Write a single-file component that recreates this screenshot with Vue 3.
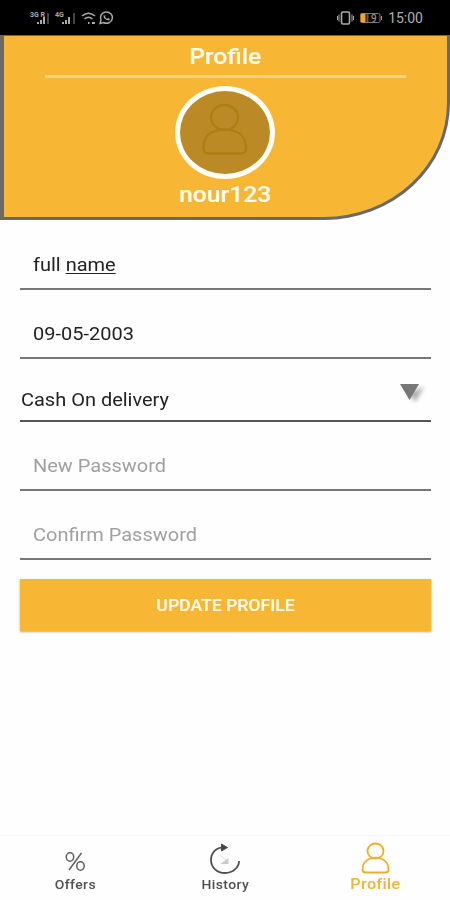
<script setup>
import { ref } from 'vue'

const fullName = ref(['full ', 'name'])
const birthDate = ref('09-05-2003')
const payment = ref('Cash On delivery')
const username = ref('nour123')
const passwords = ['New Password', 'Confirm Password']
</script>

<template>
  <main class="screen">
    <div class="status">
      <svg class="status-left" width="90" height="20" viewBox="0 0 90 20" fill="none">
        <text x="0" y="8" class="tiny">3G R</text>
        <g fill="#aaa">
          <path d="M7 13h2v2H7zM10 11h2v4h-2zM13 8h2v7h-2z" />
          <path d="M17 4h2v11h-2z" fill="#444" />
          <path d="M32 13h2v2h-2zM35 11h2v4h-2zM38 8h2v7h-2z" />
          <path d="M43 4h2v11h-2z" fill="#444" />
        </g>
        <text x="25" y="8" class="tiny">4G</text>
        <g stroke="#aaa" stroke-width="1.5">
          <path d="M52 7q6.5-5.500 13 0M54.500 10q4-3.500 8 0" />
          <path d="M58 14h1.500M62 14h3" stroke-width="2" />
          <path d="M70 14.500l1-3.500a6 5.600 0 1 1 2.500 2.500z" />
          <path d="M73.500 6.500q-.5 4 5.500 5l1-1.500-2-1-1 1-2-2 .5-1.500z" fill="#aaa" stroke="none" />
        </g>
      </svg>
      <div class="status-right">
        <svg width="48" height="16" viewBox="0 0 48 16" fill="none" stroke="#aaa">
          <rect x="4.500" y="2" width="8" height="12" rx="1.500" stroke-width="1.600" />
          <path d="M2 4.500v7M15 4.500v7M.5 6v4M16.500 6v4" />
          <rect x="24" y="3.500" width="19" height="9" rx="1.500" stroke="#777" />
          <path d="M44.500 6v4" stroke="#999" />
          <rect x="23.500" y="3.500" width="5" height="9" fill="#f4a62b" stroke="none" />
          <path d="M30.500 4v8" stroke="#80591c" stroke-width="2" />
          <text x="34" y="11.500" class="battery">9</text>
        </svg>
        <span class="clock">15:00</span>
      </div>
    </div>

    <header class="header">
      <h1 class="title"><span>Profile</span></h1>
      <div class="rule"></div>
      <div class="avatar">
        <svg width="46" height="54" viewBox="0 0 46 54" fill="none" stroke="#ad7e12" stroke-width="2.300">
          <ellipse cx="22.500" cy="14.500" rx="13.500" ry="12.500" />
          <path d="M13.500 28C5 30 1.500 37 1.500 45.500q0 5 4.500 5h33q5 0 5-5C44 37 40 30 31.500 28q-9-3.500-18 0" />
        </svg>
      </div>
      <h2 class="username"><span>{{ username }}</span></h2>
    </header>

    <form class="form" @submit.prevent>
      <div class="field first">
        <span class="text">{{ fullName[0] }}<u>{{ fullName[1] }}</u></span>
      </div>
      <div class="field"><span class="text">{{ birthDate }}</span></div>
      <div class="field select">
        <span class="text">{{ payment }}</span>
        <svg class="arrow" width="30" height="26" viewBox="0 0 30 26">
          <path class="shadow" d="M11 12L26 6L17 21Z" />
          <path d="M2 3h19l-9.500 16z" fill="#777" />
        </svg>
      </div>
      <div v-for="label in passwords" :key="label" class="field password">
        <span class="text">{{ label }}</span>
      </div>
      <button class="submit" type="submit"><span>UPDATE PROFILE</span></button>
    </form>

    <nav class="nav">
      <a class="tab">
        <svg width="34" height="34" viewBox="0 0 34 34" fill="none" stroke="#606060" stroke-width="1.500">
          <ellipse cx="12" cy="15" rx="3.700" ry="4.200" />
          <ellipse cx="22.500" cy="24" rx="3.700" ry="4.200" />
          <path d="M23.500 11L11 28" />
        </svg>
        <span class="label">Offers</span>
      </a>
      <a class="tab">
        <svg width="34" height="34" viewBox="0 0 34 34" fill="none" stroke="#505050">
          <path d="M17 5.500C8 5 3 11 3 18c0 7.500 6 13 14 13s14-5.500 14-12" stroke-width="1.800" />
          <path d="M13.500 2l6 3.500-6 3.500z" fill="#444" />
          <path d="M12 13l7 6" stroke="#ddd" />
          <path d="M20.500 16v6h-8z" fill="#ccc" stroke="none" />
        </svg>
        <span class="label">History</span>
      </a>
      <a class="tab active">
        <svg width="34" height="34" viewBox="0 0 34 34" fill="none" stroke="#f0ad28" stroke-width="1.800">
          <ellipse cx="17.500" cy="9" rx="8" ry="7.500" />
          <path d="M12.500 16.500C7.500 18 4.500 22 4.500 27.500q0 3 3 3h20q3 0 3-3C30.500 22 27.500 18 22.500 16.500q-5-1.500-10 0" />
        </svg>
        <span class="label">Profile</span>
      </a>
    </nav>
  </main>
</template>

<style>
body { margin: 0; background: #fff; }
</style>

<style scoped>
* { box-sizing: border-box; }
.screen {
  width: 450px;
  height: 900px;
  display: flex;
  flex-direction: column;
  overflow: hidden;
  background: #fefefe;
  font-family: Roboto, "Liberation Sans", sans-serif;
  color: #222;
}
.status {
  height: 35px;
  flex: none;
  display: flex;
  justify-content: space-between;
  padding: 9px 27px 0 30px;
  background: #000;
}
.tiny { font-size: 7px; font-weight: 700; fill: #aaa; }
.battery { font-size: 10px; fill: #aaa; stroke: none; }
.status-right { display: flex; gap: 3px; height: 18px; align-items: center; }
.clock { font-size: 14px; line-height: 18px; color: #b0b0b0; }
.header {
  height: 185px;
  flex: none;
  display: flex;
  flex-direction: column;
  align-items: center;
  border: solid #696969;
  border-width: 1px 3px 3px 4px;
  border-bottom-right-radius: 126px 117px;
  background: #f7b633;
  color: #fffbed;
}
.title, .username { margin: 0; font-weight: 500; font-size: 22px; line-height: 26px; -webkit-text-stroke: .2px #fffbed; }
.title { padding-top: 8px; }
.title span, .username span { display: block; transform: scaleX(1.12); }
.rule { width: 361px; height: 3px; margin-top: 5px; background: #f9d57f; }
.avatar {
  width: 100px;
  height: 93px;
  margin: 8px 1px 0 0;
  display: flex;
  align-items: center;
  justify-content: center;
  border: 5px solid #fffdf5;
  border-radius: 50%;
  background: #bb8a26;
}
.avatar svg { margin: 0 0 5px; }
.username { margin-top: 3px; }
.form { flex: 1; display: flex; flex-direction: column; padding: 0 19px 0 20px; }
.field {
  height: 69px;
  flex: none;
  display: flex;
  align-items: flex-end;
  justify-content: space-between;
  padding: 0 0 12px 13px;
  border-bottom: 2px solid #777;
}
.field.first { height: 70px; }
.field.select { height: 63px; padding: 0 3px 9px 1px; border-bottom-color: #555; }
.text {
  font-size: 18.5px;
  line-height: 22px;
  white-space: pre;
  transform: scaleX(1.08);
  transform-origin: left;
}
.text u { text-decoration-thickness: 1px; text-underline-offset: 2px; }
.password .text { color: #a0a0a0; }
.arrow { margin-bottom: 4px; }
.shadow { fill: #aaa; filter: blur(2px); }
.submit {
  height: 52px;
  margin-top: 19px;
  padding: 0;
  border: 0;
  background: #f7b633;
  color: #fffbea;
  font: 500 16px/54px Roboto, "Liberation Sans", sans-serif;
  -webkit-text-stroke: .2px #fffbea;
  box-shadow: 0 1px 2px #aaa;
}
.submit span { display: block; transform-origin: center; transform: scaleX(1.1); }
.nav {
  height: 65px;
  flex: none;
  display: grid;
  grid-template-columns: repeat(3, 1fr);
  border-top: 1px solid #f6f6f6;
}
.tab { display: flex; flex-direction: column; align-items: center; padding-top: 6px; color: #505050; }
.label { font-size: 13px; line-height: 18px; font-weight: 500; letter-spacing: .4px; transform: scaleX(1.07); }
.active { color: #f2b32f; }
.active .label { font-size: 15px; line-height: 16px; }
</style>
